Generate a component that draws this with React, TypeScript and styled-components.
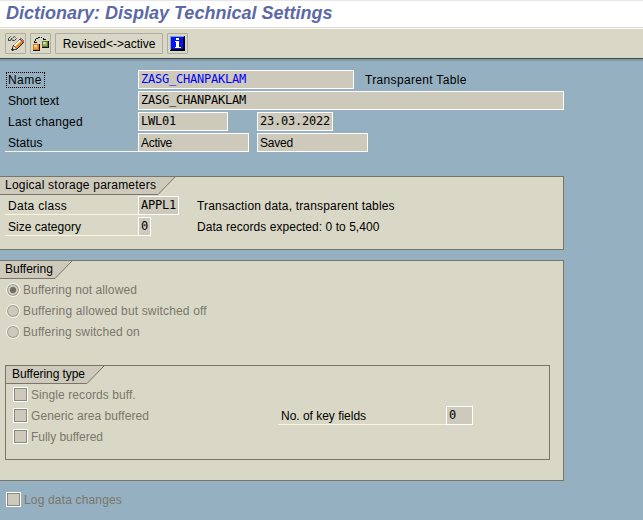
import React from "react";
import styled, { createGlobalStyle, css } from "styled-components";

const colors = {
  page: "#95b0c1",
  panel: "#d9d8c6",
  field: "#cdcabc",
  line: "#7a756a",
  underline: "#f7f6e0",
  muted: "#7a776b",
};

const GlobalStyle = createGlobalStyle`
  * { box-sizing: border-box; }
  body { margin: 0; background: ${colors.page}; }
`;

const Screen = styled.div`
  width: 643px;
  height: 520px;
  overflow: hidden;
  background: ${colors.page};
  color: #000;
  font: 12px/20px "Liberation Sans", Arial, sans-serif;
  white-space: nowrap;
`;

const TitleBar = styled.h1`
  height: 28px;
  margin: 0;
  padding-left: 6px;
  border-top: 1px solid #e6e6e6;
  border-bottom: 1px solid #dcdcdc;
  background: #fff;
  color: #5b69a6;
  font: italic bold 18px/24px "Liberation Sans", Arial, sans-serif;
`;

const Toolbar = styled.div`
  display: flex;
  gap: 4px;
  height: 31px;
  padding: 4px 5px 0;
  border-top: 1px solid #fbfae6;
  border-bottom: 1px solid #404647;
  background: ${colors.panel};
`;

const ToolButton = styled.button<{ $width?: number }>`
  display: flex;
  align-items: center;
  justify-content: center;
  width: ${(p) => p.$width ?? 21}px;
  height: 21px;
  padding: 0;
  border: 1px solid #aeaca0;
  border-radius: 1px;
  background: ${colors.panel};
  color: #000;
  font: inherit;
  svg { display: block; }
`;

const Content = styled.main`
  border-top: 2px solid #829cab;
  padding-top: 9px;
`;

const Text = styled.span<{ $track?: number }>`
  letter-spacing: ${(p) => p.$track ?? 0}px;
`;

const Form = styled.div`
  display: grid;
  grid-auto-rows: 19px;
  row-gap: 2px;
`;

const Row = styled.div`
  display: flex;
  height: 19px;
`;

const Label = styled.label<{ $width?: number; $underlined?: boolean }>`
  width: ${(p) => p.$width ?? 133}px;
  margin-left: 5px;
  padding-left: 3px;
  ${(p) => p.$underlined && css`border-bottom: 1px solid ${colors.underline};`}
`;

const FocusedText = styled(Text)`
  display: block;
  width: 39px;
  height: 16px;
  margin: 2px 0 0 -2px;
  padding-left: 1px;
  border: 1px dotted #000;
  line-height: 14px;
`;

const Field = styled.div<{ $width: number; $mono?: boolean; $link?: boolean }>`
  flex: none;
  width: ${(p) => p.$width}px;
  height: 19px;
  padding-left: 2px;
  border: 1px solid #fff;
  background: ${colors.field};
  color: ${(p) => (p.$link ? "#0000ff" : "#000")};
  line-height: 18px;
  ${(p) =>
    p.$mono &&
    css`
      font: 12px/17px "DejaVu Sans Mono", monospace;
      letter-spacing: -0.224px;
    `}
`;

const SecondField = styled(Field)<{ $gap: number }>`
  margin-left: ${(p) => p.$gap}px;
`;

const Description = styled(Text)<{ $gap: number }>`
  margin-left: ${(p) => p.$gap}px;
`;

const Group = styled.section<{ $height: number; $inner?: boolean }>`
  width: ${(p) => (p.$inner ? 545 : 564)}px;
  height: ${(p) => p.$height}px;
  margin-left: ${(p) => (p.$inner ? 5 : 0)}px;
  border: 1px solid ${colors.line};
  border-left-width: ${(p) => (p.$inner ? 1 : 0)}px;
  background: ${colors.panel};
`;

const GroupTab = styled.header<{ $pad: number }>`
  display: grid;
  height: 19px;
  > * { grid-area: 1 / 1; }
  > span { padding-left: ${(p) => p.$pad}px; line-height: 17px; }
  svg { display: block; }
`;

const OptionList = styled.div<{ $left: number }>`
  display: grid;
  grid-auto-rows: 21px;
  padding-left: ${(p) => p.$left}px;
  color: ${colors.muted};
`;

const Option = styled.label`
  display: flex;
  align-items: center;
  line-height: 21px;
`;

const RadioMark = styled.span<{ $checked?: boolean }>`
  width: 14px;
  height: 14px;
  margin: 0 3px 2px 0;
  border: 1px solid #f8f8ed;
  border-radius: 50%;
  box-shadow: inset 0 0 0 1px #9a988c;
  background: ${(p) =>
    p.$checked
      ? `radial-gradient(circle, #706d62 0 2.7px, ${colors.field} 3.6px)`
      : colors.field};
`;

const CheckMark = styled.span`
  width: 15px;
  height: 15px;
  margin: 0 3px 2px 0;
  border: 1px solid #fff;
  box-shadow: inset 0 0 0 1px #8a877c;
  background: ${colors.field};
`;

const GroupGap = styled.div<{ $height: number }>`
  height: ${(p) => p.$height}px;
`;

const BufferingColumns = styled.div`
  display: flex;
  align-items: flex-start;
`;

const KeyFields = styled.div`
  display: flex;
  height: 19px;
  margin-top: 21px;
`;

const OptionColumn = styled.div`
  width: 267px;
`;

const LogOption = styled.div`
  padding: 9px 0 0 6px;
  color: ${colors.muted};
`;

function Tab({ title, track, slope, pad }: { title: string; track: number; slope: number; pad: number }) {
  return (
    <GroupTab $pad={pad}>
      <svg width={slope + 20} height="18">
        <path d={`M0 0H${slope + 17}L${slope} 17.5H0Z`} fill={colors.field} />
        <path d={`M0 17.5H${slope}L${slope + 17} 0`} fill="none" stroke={colors.line} />
      </svg>
      <Text $track={track}>{title}</Text>
    </GroupTab>
  );
}

const ChangeIcon = () => (
  <svg width="17" height="17" viewBox="0 0 17 17">
    <path d="M1.5 5.5v-2l2-2M1.5 5.5h2l1-2 1 2h2l2-2M5.5 3l2-1.5 1 1" fill="none" stroke="#24241c" strokeWidth=".9" />
    <path d="m5 15 1.5-4.5L13 4l3.5 3.5L10 14Z" fill="#f29a20" stroke="#171a38" />
    <path d="m7.5 10.7 5.7-5.6" stroke="#fff" strokeWidth="1.8" />
    <path d="m9.5 13 6-5.7" stroke="#d85d28" strokeWidth=".8" />
    <path d="m13 4 1-.7 3 2.8-.7 1.7Z" fill="#efa095" stroke="#31231f" strokeWidth=".6" />
    <path d="m5 15 1.5-4.5L9.7 14Z" fill="#fff6db" stroke="#20190a" strokeWidth=".6" />
    <path d="M4.5 15.5h2v-2H5z" fill="#000" />
  </svg>
);

const HierarchyIcon = () => (
  <svg width="17" height="17" viewBox="0 0 17 17" shapeRendering="crispEdges">
    <path d="M2.5 8V6h1V4h1V3h2V2h3v1h2v1h1v1" fill="none" stroke="#111" strokeDasharray="2 1" />
    <path d="M2 7h3v1H2zM11 4h3v1h-3z" fill="#111" />
    <path d="M1.5 9.5h5v5h-5z" fill="#f3a232" stroke="#d77916" />
    <path d="M10.5 6.5h5v5h-5z" fill="#98ae55" stroke="#5e7931" />
    <path d="M1 15.5h6.5V9M10 12.5h6.5V6" fill="none" stroke="#111" />
    <path d="M2 10h3v2H2zM11 7h3v2h-3z" fill="#fff" opacity=".55" />
  </svg>
);

const InfoIcon = () => (
  <svg width="15" height="15" viewBox="0 0 15 15" shapeRendering="crispEdges">
    <path d="M0 0h15v15H0z" fill="#000" />
    <path d="M1 1h12v12H1z" fill="#0712ed" />
    <path d="M0 0h14v1H1v13H0z" fill="#6da9ea" />
    <path d="M6 2h3v2H6zM5 5h4v6h2v1H5v-1h1V6H5z" fill="#fff" />
  </svg>
);

export default function App() {
  return (
    <Screen>
      <GlobalStyle />
      <TitleBar>Dictionary: Display Technical Settings</TitleBar>
      <Toolbar>
        <ToolButton aria-label="Display / change"><ChangeIcon /></ToolButton>
        <ToolButton aria-label="Hierarchy"><HierarchyIcon /></ToolButton>
        <ToolButton $width={108}><Text>{"Revised<->active"}</Text></ToolButton>
        <ToolButton aria-label="Information"><InfoIcon /></ToolButton>
      </Toolbar>
      <Content>
        <Form>
          <Row>
            <Label><FocusedText $track={0.45}>Name</FocusedText></Label>
            <Field $width={216} $mono $link>ZASG_CHANPAKLAM</Field>
            <Description $gap={11} $track={0.33}>Transparent Table</Description>
          </Row>
          <Row>
            <Label><Text $track={-0.04}>Short text</Text></Label>
            <Field $width={426} $mono>ZASG_CHANPAKLAM</Field>
          </Row>
          <Row>
            <Label><Text $track={0.24}>Last changed</Text></Label>
            <Field $width={90} $mono>LWL01</Field>
            <SecondField $gap={29} $width={76} $mono>23.03.2022</SecondField>
          </Row>
          <Row>
            <Label $underlined><Text $track={0.12}>Status</Text></Label>
            <Field $width={111}><Text $track={-0.28}>Active</Text></Field>
            <SecondField $gap={8} $width={111}><Text $track={-0.2}>Saved</Text></SecondField>
          </Row>
        </Form>
        <GroupGap $height={24} />
        <Group $height={74}>
          <Tab title="Logical storage parameters" track={0.22} slope={158} pad={5} />
          <Form>
            <Row>
              <Label $underlined><Text $track={0.3}>Data class</Text></Label>
              <Field $width={41} $mono>APPL1</Field>
              <Description $gap={18} $track={0.17}>Transaction data, transparent tables</Description>
            </Row>
            <Row>
              <Label $underlined><Text $track={0.02}>Size category</Text></Label>
              <Field $width={13} $mono>0</Field>
              <Description $gap={46} $track={0.05}>Data records expected: 0 to 5,400</Description>
            </Row>
          </Form>
        </Group>
        <GroupGap $height={10} />
        <Group $height={221}>
          <Tab title="Buffering" track={0} slope={55} pad={5} />
          <OptionList $left={6}>
            <Option><RadioMark $checked /><Text $track={0.1}>Buffering not allowed</Text></Option>
            <Option><RadioMark /><Text $track={0.16}>Buffering allowed but switched off</Text></Option>
            <Option><RadioMark /><Text $track={0.11}>Buffering switched on</Text></Option>
          </OptionList>
          <GroupGap $height={22} />
          <Group $height={95} $inner>
            <Tab title="Buffering type" track={-0.06} slope={81} pad={6} />
            <BufferingColumns>
              <OptionColumn>
                <OptionList $left={7}>
                  <Option><CheckMark /><Text $track={0.08}>Single records buff.</Text></Option>
                  <Option><CheckMark /><Text $track={0.07}>Generic area buffered</Text></Option>
                  <Option><CheckMark /><Text $track={-0.04}>Fully buffered</Text></Option>
                </OptionList>
              </OptionColumn>
              <KeyFields>
                <Label $underlined $width={168}><Text $track={-0.02}>No. of key fields</Text></Label>
                <Field $width={27} $mono>0</Field>
              </KeyFields>
            </BufferingColumns>
          </Group>
        </Group>
        <LogOption>
          <Option><CheckMark /><Text $track={0.16}>Log data changes</Text></Option>
        </LogOption>
      </Content>
    </Screen>
  );
}
